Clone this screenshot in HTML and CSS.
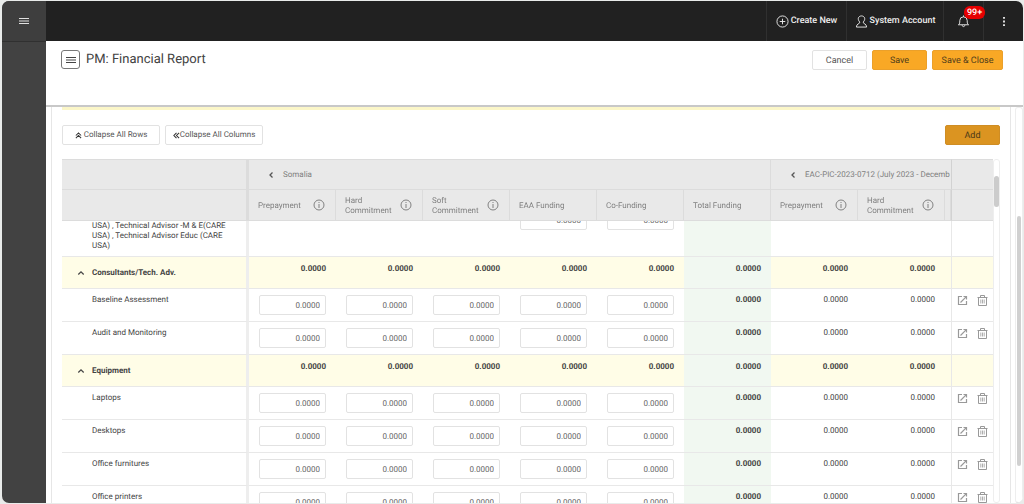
FILE: index.html
```
<!DOCTYPE html>
<html lang="en">
<head>
<meta charset="utf-8">
<title>PM: Financial Report</title>
<link rel="stylesheet" href="styles.css">
</head>
<body>
<svg class="defs" aria-hidden="true">
  <symbol id="info" viewBox="0 0 12 12"><circle cx="6" cy="6" r="5" fill="none" stroke="currentColor"/><path d="M6 5v4M6 3v1" stroke="currentColor" fill="none"/></symbol>
  <symbol id="left" viewBox="0 0 6 8"><path d="M4.500 1.500 2 4l2.500 2.500" fill="none" stroke="currentColor" stroke-width="1.300"/></symbol>
  <symbol id="up" viewBox="0 0 8 6"><path d="M1.300 4.500 4 1.800l2.700 2.700" fill="none" stroke="currentColor" stroke-width="1.200"/></symbol>
  <symbol id="open" viewBox="0 0 11 11"><path d="M5 1.500H1.500v8h8V6M6.500 1.500h3v3M9.300 1.700 3.500 7.500" fill="none" stroke="currentColor" stroke-width="1.200"/></symbol>
  <symbol id="trash" viewBox="0 0 11 11"><path d="M.5 2.500h10M3.500 2.500v-2h4v2M1.500 2.500v8h8v-8" fill="none" stroke="currentColor"/><path d="M3.800 4.500v4M5.500 4.500v4M7.200 4.500v4" stroke="currentColor" stroke-width=".8"/></symbol>
  <symbol id="bars" viewBox="0 0 10 8"><path d="M0 1.500h10M0 4h10M0 6.500h10" stroke="currentColor" stroke-width="1.200"/></symbol>
</svg>
<div class="app">
  <aside class="sidebar">
    <button class="side-toggle" aria-label="Open navigation"><svg class="bars"><use href="#bars"/></svg></button>
  </aside>
  <div class="main">
    <header class="topbar">
      <button class="top-item create"><svg class="top-icon" viewBox="0 0 14 14" fill="none" stroke="currentColor"><circle cx="7" cy="7" r="6"/><path d="M7 4v6M4 7h6"/></svg>Create New</button>
      <button class="top-item account"><svg class="top-icon" viewBox="0 0 14 14" fill="none" stroke="currentColor"><path d="M5 7.500C2 4 4 1 7 1s5 3 2 6.500v1c0 .8 3.500 1 3.500 4.500h-11c0-3.500 3.500-3.700 3.500-4.500z"/></svg>System Account</button>
      <button class="top-item bell" aria-label="Notifications"><svg class="top-icon" viewBox="0 0 14 14" fill="none" stroke="currentColor"><path d="M1.500 10.500c1.500-1 1.500-2 1.500-4.500a4 4 0 0 1 8 0c0 2.500 0 3.500 1.500 4.500zM5.500 11c.2 2 2.800 2 3 0M7 2V.5"/></svg><span class="badge">99+</span></button>
      <button class="top-item more" aria-label="More options"><svg class="dots" viewBox="0 0 4 12" fill="currentColor"><path d="M1 1h2v2H1zM1 5h2v2H1zM1 9h2v2H1z"/></svg></button>
    </header>
    <div class="pagehead">
      <button class="menu" aria-label="Report menu"><svg class="bars"><use href="#bars"/></svg></button>
      <h1>PM: Financial Report</h1>
      <div class="actions">
        <button class="btn cancel">Cancel</button>
        <button class="btn primary">Save</button>
        <button class="btn primary wide">Save &amp; Close</button>
      </div>
    </div>
    <div class="content">
      <section class="panel">
        <div class="strip"></div>
        <div class="tools">
          <button class="btn tool"><svg class="dbl up" viewBox="0 0 8 8"><path d="M1 4l3-3 3 3M1 7l3-3 3 3" fill="none" stroke="currentColor" stroke-width="1.200"/></svg>Collapse All Rows</button>
          <button class="btn tool"><svg class="dbl" viewBox="0 0 8 8"><path d="M4 1 1 4l3 3M7 1 4 4l3 3" fill="none" stroke="currentColor" stroke-width="1.200"/></svg>Collapse All Columns</button>
          <button class="btn add">Add</button>
        </div>
        <div class="grid">
          <div class="scroller" id="scroller">
            <table>
              <colgroup><col class="c-name"><col span="8"><col class="c-edge"><col class="c-act"></colgroup>
              <thead>
                <tr><th class="name"></th><th colspan="6" class="grp end"><div class="head"><svg class="chev"><use href="#left"/></svg>Somalia</div></th><th colspan="3" class="grp"><div class="head"><svg class="chev"><use href="#left"/></svg>EAC-PIC-2023-0712 (July 2023 - Decemb</div></th><th class="act"></th></tr>
                <tr><th class="name"></th>
                  <th><div class="col"><span>Prepayment</span><svg class="info"><use href="#info"/></svg></div></th>
                  <th><div class="col"><span>Hard Commitment</span><svg class="info"><use href="#info"/></svg></div></th>
                  <th><div class="col"><span>Soft Commitment</span><svg class="info"><use href="#info"/></svg></div></th>
                  <th><div class="col"><span>EAA Funding</span></div></th>
                  <th><div class="col"><span>Co-Funding</span></div></th>
                  <th><div class="col"><span>Total Funding</span></div></th>
                  <th><div class="col"><span>Prepayment</span><svg class="info"><use href="#info"/></svg></div></th>
                  <th><div class="col"><span>Hard Commitment</span><svg class="info"><use href="#info"/></svg></div></th>
                  <th></th><th class="act"></th></tr>
              </thead>
              <tbody id="rows"></tbody>
            </table>
          </div>
          <div class="rail"><div class="thumb"></div></div>
        </div>
      </section>
      <div class="pagerail"><div class="pagethumb"></div></div>
    </div>
  </div>
</div>
<script src="app.js"></script>
</body>
</html>
```
FILE: styles.css
```
* { box-sizing: border-box; }
body { margin: 0; background: #e9ebea; font: 8px/10px Roboto, "Liberation Sans", sans-serif; color: #444; text-rendering: geometricPrecision; }
button, input { font: inherit; color: inherit; margin: 0; text-rendering: inherit; }
button { cursor: pointer; padding: 0; }
svg { display: block; flex: none; }
.defs { position: absolute; width: 0; height: 0; }
.app { display: flex; height: calc(100vh - 2px); margin: 1px 1px 1px 2px; border-radius: 7px; overflow: hidden; background: #fff; }
.sidebar { width: 44px; flex: none; background: #424242; }
.side-toggle { display: grid; place-items: center; width: 100%; height: 41px; border: 0; border-bottom: 1px solid #303030; background: #3e3e3e; color: #e0e0e0; }
.bars { width: 10px; height: 8px; }
.main { flex: 1; min-width: 0; display: flex; flex-direction: column; }
.topbar { display: flex; justify-content: flex-end; height: 40px; flex: none; background: #212121; color: #eee; }
.top-item { display: flex; align-items: center; justify-content: center; gap: 2px; border: 0; border-left: 1px solid #303030; background: none; font-size: 9px; font-weight: 500; white-space: nowrap; }
.create { width: 80px; }
.account { width: 97px; }
.bell { width: 40px; position: relative; }
.more { width: 40px; }
.top-icon { width: 13px; height: 13px; }
.dots { width: 4px; height: 11px; }
.badge { position: absolute; left: 20px; top: 5px; padding: 2px 3px 1px; border-radius: 6px; background: #e60000; color: #fff; font-size: 9px; }
.pagehead { display: flex; align-items: flex-start; height: 66px; flex: none; padding: 9px 20px 0 15px; background: #fff; border-bottom: 2px solid #c8c8c8; z-index: 1; }
.menu { display: grid; place-items: center; width: 19px; height: 19px; border: 1px solid #777; border-radius: 3px; background: #fff; }
h1 { margin: 0 0 0 6px; font-size: 13px; line-height: 20px; font-weight: 400; color: #424242; }
.actions { display: flex; gap: 5px; margin-left: auto; }
.btn { height: 20px; width: 55px; padding-top: 1px; border: 1px solid #e2e2e2; border-radius: 2px; background: #fff; color: #555; font-size: 9px; white-space: nowrap; }
.btn.primary { background: #f9a825; border-color: #eba02a; color: #4f3c1a; }
.btn.wide { width: 71px; }
.btn.add { margin-left: auto; background: #db9421; border-color: #cf8d24; color: #4d3a18; }
.content { flex: 1; min-height: 0; display: flex; gap: 4px; padding-left: 5px; }
.panel { flex: 1; min-width: 0; display: flex; flex-direction: column; border: solid #e6e6e6; border-width: 0 1px; padding: 0 10px; }
.strip { height: 3px; flex: none; background: #fbf6c8; }
.tools { display: flex; gap: 5px; padding: 15px 0 14px; }
.btn.tool { display: flex; align-items: center; justify-content: center; width: 98px; padding-top: 0; font-size: 8px; }
.dbl { width: 7px; height: 7px; color: #333; }
.dbl.up { margin-right: 2px; }
.grid { flex: 1; min-height: 0; display: flex; }
.scroller { flex: 1; min-width: 0; overflow: hidden; }
table { width: 100%; table-layout: fixed; border-collapse: separate; border-spacing: 0; }
.c-name { width: 187px; }
.c-edge { width: 6px; }
.c-act { width: 42px; }
thead { position: sticky; top: 0; z-index: 1; }
th { height: 31px; padding: 0; background: #e9e9e9; border: solid #dcdcdc; border-width: 0 1px 1px 0; font-weight: 400; text-align: left; color: #808080; }
thead tr:first-child th { border-top: 1px solid #dcdcdc; }
th.act { border-left: 1px solid #d2d2d2; border-right: 0; }
.grp:not(.end) { border-right: 0; }
.head { display: flex; align-items: center; padding-left: 19px; white-space: nowrap; overflow: hidden; }
.chev { width: 6px; height: 8px; margin-right: 9px; color: #555; }
.col { display: flex; align-items: center; justify-content: space-between; padding: 0 10px 0 9px; }
.col span { min-width: 50px; padding-top: 2px; }
.col span:not(:only-child) { width: 50px; }
.info { width: 12px; height: 12px; }
td { height: 33px; padding: 6px 10px 0; border-bottom: 1px solid #e8e8e8; text-align: right; vertical-align: top; }
td.name { padding: 6px 12px 0 30px; text-align: left; }
.name { border-right: 3px solid #eee; }
thead .name { border-right-color: #dcdcdc; }
.total { background: #f1f8f1; font-weight: 700; }
.edge { padding: 0; }
td.act { padding: 6px 5px 0; border-left: 1px solid #e8e8e8; }
.group td { height: 32px; padding-top: 7px; background: #fffde7; font-weight: 700; }
.group td.total { background: #f1f8f1; }
.group td.name { padding: 11px 0 0 15px; }
.group-name { display: flex; align-items: center; gap: 7px; border: 0; background: none; font-weight: 700; }
.caret { width: 8px; height: 6px; }
.partial td { height: 53px; }
.partial td.name { padding-top: 17px; }
.amount { display: block; width: 100%; height: 20px; padding: 0 5px; border: 1px solid #e2e2e2; border-radius: 2px; background: #fff; color: #666; text-align: right; }
.icons { display: flex; gap: 9px; color: #999; }
.icons button { border: 0; background: none; color: inherit; }
.icons svg { width: 11px; height: 11px; }
.rail { width: 7px; flex: none; border: 1px solid #eee; border-radius: 3px; padding: 16px 0 0; }
.thumb { width: 5px; height: 31px; border-radius: 3px; background: #ccc; }
.pagerail { width: 8px; flex: none; border: 1px solid #eee; border-bottom-color: #ddd; border-radius: 3px; padding: 108px 1px 0; }
.pagethumb { height: 250px; border-radius: 3px; background: #d0d0d0; }
```
FILE: app.js
```
const rows = [
  { type: "partial", name: "USA) , Technical Advisor -M & E(CARE<br>USA) , Technical Advisor Educ (CARE<br>USA)" },
  { type: "group", name: "Consultants/Tech. Adv." },
  { name: "Baseline Assessment" },
  { name: "Audit and Monitoring" },
  { type: "group", name: "Equipment" },
  { name: "Laptops" },
  { name: "Desktops" },
  { name: "Office furnitures" },
  { name: "Office printers" }
];
const columns = ["Prepayment", "Hard Commitment", "Soft Commitment", "EAA Funding", "Co-Funding"];
const value = "0.0000";
const icons = '<div class="icons"><button aria-label="Open"><svg><use href="#open"/></svg></button><button aria-label="Delete"><svg><use href="#trash"/></svg></button></div>';

document.getElementById("rows").innerHTML = rows.map(row => {
  const group = row.type === "group";
  const partial = row.type === "partial";
  const name = group
    ? `<button class="group-name"><svg class="caret"><use href="#up"/></svg>${row.name}</button>`
    : row.name;
  const cells = columns.map((column, i) => {
    if (group) return `<td>${value}</td>`;
    if (partial && i < 3) return "<td></td>";
    return `<td><input class="amount" value="${value}" aria-label="${column}"></td>`;
  }).join("");
  const plain = partial ? "" : value;
  return `<tr class="${row.type || "item"}"><td class="name">${name}</td>${cells}` +
    `<td class="total">${plain}</td><td>${plain}</td><td>${plain}</td>` +
    `<td class="edge"></td><td class="act">${group ? "" : icons}</td></tr>`;
}).join("");

// Keep the long first row partly under the sticky header.
document.getElementById("scroller").scrollTop = 17;
```
